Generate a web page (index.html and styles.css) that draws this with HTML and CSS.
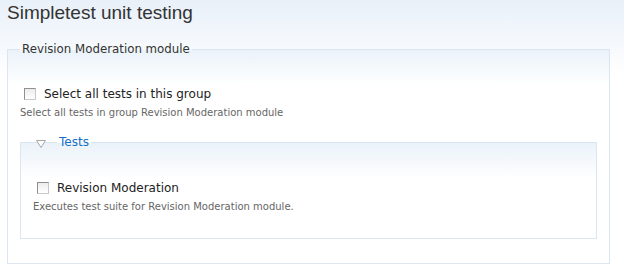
FILE: index.html
```html
<!DOCTYPE html>
<html lang="en">
<head>
    <meta charset="UTF-8">
    <title>Simpletest unit testing</title>
    <link rel="stylesheet" href="styles.css">
</head>
<body>
    <h1 class="page-title">Simpletest unit testing</h1>
    <fieldset class="group">
        <legend>Revision Moderation module</legend>
        <div class="form-item">
            <label class="option"><input type="checkbox"> Select all tests in this group</label>
            <div class="description">Select all tests in group Revision Moderation module</div>
        </div>
        <fieldset class="group inner">
            <legend>
                <svg class="toggle" width="10" height="8" viewBox="0 0 10 8"><polygon points="0.5,0.5 9.5,0.5 5,7.5" fill="#fff" stroke="#a5a5a5"/></svg>
                <a href="#">Tests</a>
            </legend>
            <div class="form-item">
                <label class="option"><input type="checkbox"> Revision Moderation</label>
                <div class="description">Executes test suite for Revision Moderation module.</div>
            </div>
        </fieldset>
    </fieldset>
</body>
</html>
```

FILE: styles.css
```css
html {
    background: #fff;
}

body {
    margin: 0;
    padding: 0 14px 0 7px;
    min-height: 273px;
    font-family: "DejaVu Sans", Verdana, sans-serif;
    font-size: 12px;
    color: #222;
    background: linear-gradient(to bottom, #e8f0f9 0, #ffffff 75px) no-repeat;
}

.page-title {
    margin: 0;
    padding-top: 1px;
    font-family: "Liberation Sans", Arial, sans-serif;
    font-weight: normal;
    font-size: 19px;
    line-height: 24px;
    color: #333;
}

fieldset.group {
    margin: 17px 0 0;
    padding: 30px 12px 24px 12px;
    border: 1px solid #dbe6f1;
    background: linear-gradient(to bottom, #eaf2f9 0, #ffffff 35px);
}

fieldset.group legend {
    margin-left: 0;
    padding: 0 2px;
    font-size: 11.8px;
    line-height: 14px;
    color: #333;
}

fieldset.inner {
    margin: 15px 0 0;
    padding: 31px 12px 24px 12px;
}

fieldset.inner legend {
    position: relative;
    margin-left: 24px;
    font-size: 12px;
}

.toggle {
    position: absolute;
    left: -21px;
    top: 5px;
}

fieldset.inner legend a {
    color: #1470c6;
    text-decoration: none;
}

.form-item label {
    display: flex;
    align-items: center;
    line-height: 16px;
    font-size: 12px;
    color: #222;
}

.form-item input[type="checkbox"] {
    appearance: none;
    width: 12px;
    height: 12px;
    margin: 0 8px 0 4px;
    border: 1px solid #8f8f8f;
    border-right-color: #c8c8c8;
    border-bottom-color: #c8c8c8;
    background: linear-gradient(to bottom, #ececec, #fff);
}

.description {
    margin-top: 3px;
    line-height: 15px;
    font-size: 10px;
    color: #666;
}
```
